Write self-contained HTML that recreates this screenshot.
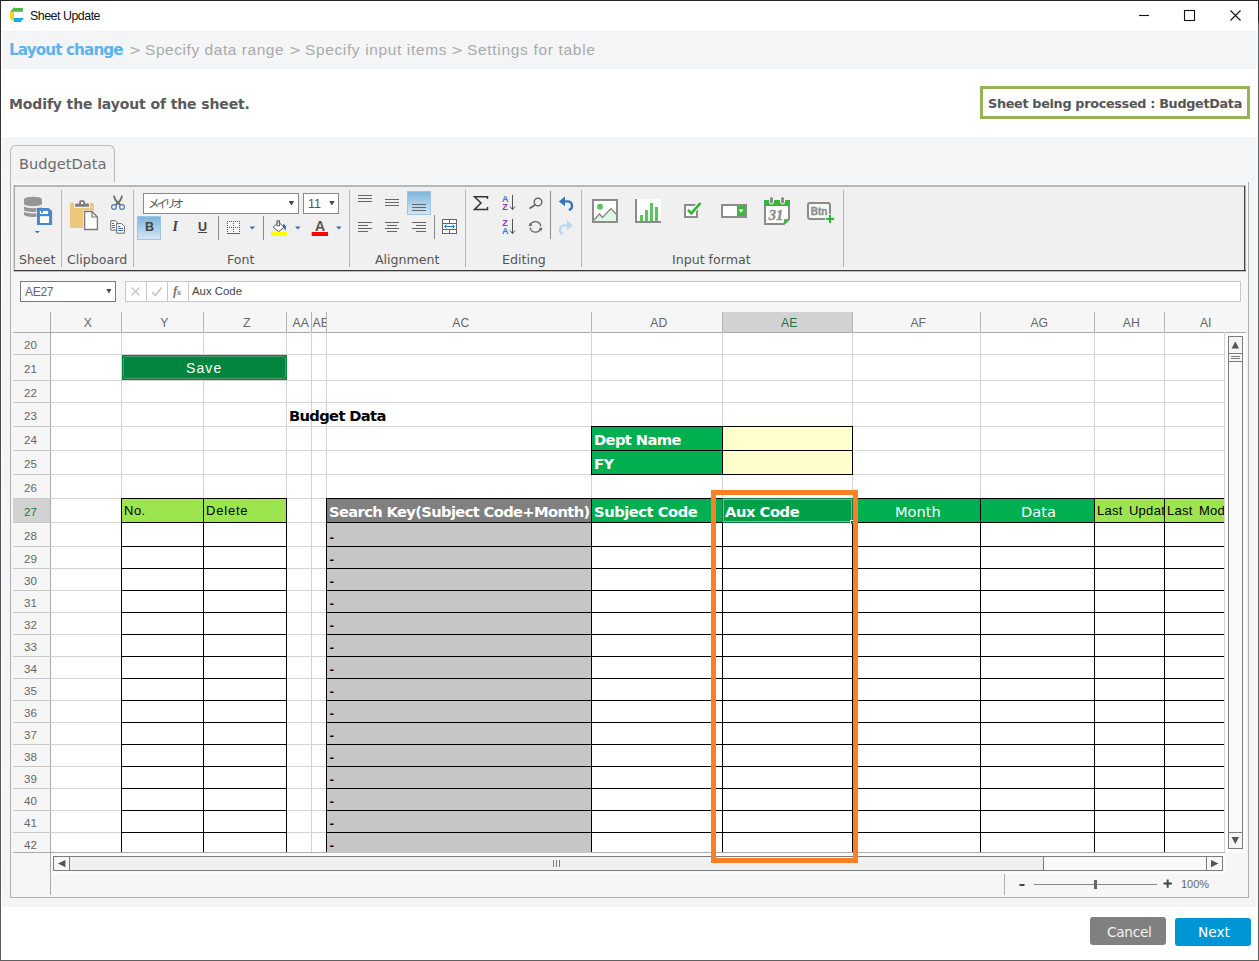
<!DOCTYPE html>
<html lang="en"><head><meta charset="utf-8"><title>Sheet Update</title>
<style>
*{box-sizing:border-box;margin:0;padding:0}
html,body{width:1259px;height:961px;overflow:hidden;background:#fff}
body{font-family:"DejaVu Sans","Liberation Sans","Noto Sans CJK JP",sans-serif;color:#555}
#win{position:absolute;left:0;top:0;width:1259px;height:961px;background:#fff;overflow:hidden}
#win div,#win span,#win i,#win svg{position:absolute}
.t{white-space:nowrap;line-height:1}
/* frame */
#bL{left:0;top:0;width:1px;height:961px;background:linear-gradient(#2a2a2a,#444 30%,#606060)}
#bT{left:0;top:0;width:1259px;height:1px;background:#22242a}
#bR{left:1258px;top:0;width:1px;height:961px;background:linear-gradient(#222 0,#222 20px,#5a6064 24px,#606060)}
#bB{left:0;top:960px;width:1259px;height:1px;background:#606060}
#crumb{left:2px;top:31px;width:1255px;height:38px;background:#f4f5f7}
#body{left:2px;top:137px;width:1255px;height:770px;background:#f4f5f7}
#panel{left:10px;top:182px;width:1239px;height:716px;background:#f6f6f6;border:1px solid #b0b0b0;border-top:none}
#tab{left:10px;top:145px;width:105px;height:37px;border:1px solid #b9b9b9;border-bottom:none;border-radius:6px 6px 0 0;background:#f2f2f2}
#badge{left:980px;top:86px;width:270px;height:33px;border:3px solid #96b455;background:#fff}
/* ribbon */
#ribbon{left:13px;top:185px;width:1233px;height:87px;background:#f0f0f0}
.rb{background:#ababab}
.sep{width:1px;background:#b5b5b5}
.gl{font-size:12.6px;color:#555;white-space:nowrap;line-height:1}
/* sheet */
#sheet{left:0;top:0;width:1259px;height:961px}
.ch{top:312px;height:20px;line-height:23px;text-align:center;font-family:"Liberation Sans",sans-serif;font-size:12.2px;color:#666;overflow:hidden;white-space:nowrap;padding-left:4.5px}
.ch.sel{background:#d2d2d2;color:#217346;top:312px}
.rh{left:13px;width:37px;text-align:center;font-family:"Liberation Sans",sans-serif;font-size:11.6px;color:#666;overflow:hidden;padding-right:2px}
.rh.sel{background:#d2d2d2;color:#217346}
.vl{top:332px;width:1px;height:520px;background:#d4d4d4}
.hl{left:50px;width:1174px;height:1px;background:#d4d4d4}
.bl{height:1px;background:#000}
.bv{top:498px;width:1px;height:354px;background:#000}
.gc{left:327px;width:264px;background:#c6c6c6;color:#000;font-size:11px;font-weight:bold;padding-left:2.5px;line-height:12px;overflow:hidden}
.cell{overflow:hidden;white-space:nowrap}

.hs{top:312px;width:1px;height:20px;background:#b4b4b4}
.rl{left:13px;width:37px;height:1px;background:#c8c8c8}

</style></head>
<body>
<div id="win">
<div id="crumb"></div>
<div id="body"></div>
<!-- title bar -->
<svg style="left:9px;top:6px" width="17" height="17" viewBox="9 6 17 17">
 <path d="M10 11.800 L14.300 7.100 L14.900 8 L22.900 7.900 V11.800Z" fill="#4db848"/>
 <path d="M10 11.800 H14 V22 L10 18.500Z" fill="#ffd02a"/>
 <path d="M14 18 H24 L20.700 22 H14Z" fill="#10b0f0"/>
</svg>
<span class="t" id="ttl" style="left:30px;top:9.6px;font-family:'Liberation Sans',sans-serif;font-size:12.4px;color:#111;letter-spacing:-0.48px">Sheet Update</span>
<svg style="left:1130px;top:5px" width="120" height="22" viewBox="0 0 120 22" fill="none" stroke="#111" stroke-width="1.1">
 <path d="M9 10.5 H19"/>
 <rect x="54.5" y="5.5" width="10" height="10"/>
 <path d="M100.5 5.5 L110.5 15.5 M110.5 5.5 L100.5 15.5"/>
</svg>
<!-- breadcrumb -->
<span class="t" id="c1" style="left:9px;top:42.5px;font-size:15.2px;font-weight:bold;color:#5ab4f0;letter-spacing:-0.88px">Layout change</span>
<span class="t" id="c2" style="left:129px;top:43px;font-size:14.8px;color:#aaa"><span style="position:static">&gt;</span></span>
<span class="t" id="c3" style="left:145px;top:42px;font-family:\'DejaVu Sans Condensed\',\'DejaVu Sans\',sans-serif;font-size:15.5px;color:#aaa;letter-spacing:0.55px">Specify data range</span>
<span class="t" id="c4" style="left:289px;top:43px;font-size:14.8px;color:#aaa">&gt;</span>
<span class="t" id="c5" style="left:305px;top:42px;font-family:\'DejaVu Sans Condensed\',\'DejaVu Sans\',sans-serif;font-size:15.5px;color:#aaa;letter-spacing:0.63px">Specify input items</span>
<span class="t" id="c6" style="left:451px;top:43px;font-size:14.8px;color:#aaa">&gt;</span>
<span class="t" id="c7" style="left:467px;top:42px;font-family:\'DejaVu Sans Condensed\',\'DejaVu Sans\',sans-serif;font-size:15.5px;color:#aaa;letter-spacing:0.68px">Settings for table</span>
<!-- heading -->
<span class="t" id="hd" style="left:9px;top:97px;font-size:14px;font-weight:bold;color:#5a5a5a;letter-spacing:-0.12px">Modify the layout of the sheet.</span>
<div id="badge"></div>
<span class="t" id="bdt" style="left:988px;top:97.6px;font-size:12.8px;font-weight:bold;color:#555;letter-spacing:-0.32px">Sheet being processed : BudgetData</span>
<!-- panel + tab -->
<div id="panel"></div>
<div id="tab"></div>
<span class="t" id="tabt" style="left:19px;top:157px;font-size:14.6px;color:#6c6c6c">BudgetData</span>
<div id="ribbon"></div>
<i class="rb" style="left:13px;top:185px;width:1233px;height:2px;background:#b8b8b8"></i>
<i class="rb" style="left:13px;top:185px;width:1px;height:87px;background:#d6d6d6"></i>
<i class="rb" style="left:14px;top:185px;width:1px;height:86px;background:#a8a8a8"></i>
<i class="rb" style="left:1244px;top:186px;width:1px;height:86px;background:#444"></i>
<i class="rb" style="left:1245px;top:186px;width:1px;height:86px;background:#b4b4b4"></i>
<i class="rb" style="left:14px;top:270px;width:1232px;height:1px;background:#3c3c3c"></i>
<i class="rb" style="left:14px;top:271px;width:1232px;height:1px;background:#bdbdbd"></i>
<i class="sep" style="left:61px;top:190px;height:77px"></i>
<i class="sep" style="left:133px;top:190px;height:77px"></i>
<i class="sep" style="left:349px;top:190px;height:77px"></i>
<i class="sep" style="left:465px;top:190px;height:77px"></i>
<i class="sep" style="left:581px;top:190px;height:77px"></i>
<i class="sep" style="left:843px;top:190px;height:77px"></i>
<i class="sep" style="left:218px;top:216px;height:24px;background:#8a8a8a"></i>
<i class="sep" style="left:263px;top:216px;height:24px;background:#8a8a8a"></i>
<i class="sep" style="left:434px;top:215px;height:24px;background:#8a8a8a"></i>
<i class="sep" style="left:550px;top:191px;height:48px;background:#8a8a8a"></i>
<span class="gl" id="g1" style="left:19px;top:254px">Sheet</span>
<span class="gl" id="g2" style="left:67px;top:254px">Clipboard</span>
<span class="gl" id="g3" style="left:227px;top:254px">Font</span>
<span class="gl" id="g4" style="left:375px;top:254px">Alignment</span>
<span class="gl" id="g5" style="left:502px;top:254px">Editing</span>
<span class="gl" id="g6" style="left:672px;top:254px">Input format</span>
<!-- font combos -->
<div style="left:143px;top:193px;width:156px;height:21px;background:#fff;border:1px solid #8a8a8a"></div>
<span class="t" id="fname" style="left:148px;top:198px;font-family:'Noto Sans CJK JP',sans-serif;font-size:11.5px;color:#555;letter-spacing:-3.3px">メイリオ</span>
<div style="left:303px;top:193px;width:36px;height:21px;background:#fff;border:1px solid #8a8a8a"></div>
<span class="t" id="fsize" style="left:308px;top:198px;font-family:'Liberation Sans',sans-serif;font-size:12.5px;color:#555">11</span>
<!-- bold button / selected align -->
<div style="left:137px;top:216px;width:24px;height:24px;background:linear-gradient(#7fb5dc,#d3e6f5);border:1px solid #9cc6e6"></div>
<div style="left:407px;top:191px;width:24px;height:24px;background:linear-gradient(#7fb5dc,#d3e6f5);border:1px solid #9cc6e6"></div>
<span class="t" id="bB2" style="left:145px;top:221px;font-family:'Liberation Sans',sans-serif;font-weight:bold;font-size:12.5px;color:#444">B</span>
<span class="t" id="bI" style="left:172.5px;top:220px;font-family:'Liberation Serif',serif;font-weight:bold;font-style:italic;font-size:14px;color:#444">I</span>
<span class="t" id="bU" style="left:198px;top:221px;font-family:'Liberation Sans',sans-serif;font-weight:bold;font-size:12.5px;color:#444">U</span>
<i style="left:198px;top:232px;width:9px;height:1px;background:#444"></i>
<svg id="ico" style="left:0;top:0" width="1259" height="280" viewBox="0 0 1259 280">
<!-- DB + floppy -->
<g fill="#969696">
 <path d="M24 199.300 a9 2.500 0 0 1 18 0 v4.500 a9 2.500 0 0 1 -18 0z"/>
 <path d="M24 205.900 a9 2.300 0 0 0 18 0 v3.800 a9 2.300 0 0 1 -18 0z"/>
 <path d="M24 211.200 a9 2.300 0 0 0 18 0 v3.400 a9 2.300 0 0 1 -18 0z"/>
</g>
<path d="M36.500 207.500 H49 L52.600 211 V225.500 H36.500Z" fill="#f6f2ee"/>
<path d="M37 208 H48.600 L52.100 211.100 V225 H37Z" fill="#4a86c8"/>
<rect x="39.900" y="216.200" width="9.200" height="6.800" fill="#fff"/>
<rect x="39.900" y="210.900" width="8.200" height="3.100" fill="#fff"/>
<rect x="41" y="210.900" width="1.900" height="1.900" fill="#4a86c8"/>
<path d="M34.700 231 h5.400 l-2.700 2.300z" fill="#4472c4"/>
<!-- clipboard -->
<path d="M72 202.800 H74 V208 H90 V202.800 H92 a2 2 0 0 1 2 2 V226 a2 2 0 0 1 -2 2 H72 a2 2 0 0 1 -2 -2 V204.800 a2 2 0 0 1 2 -2z" fill="#ecc77c"/>
<path d="M75.100 206.700 v-2.300 a1 1 0 0 1 1 -1 h3.100 v-1.700 a1.500 1.500 0 0 1 1.500 -1.500 h2.600 a1.500 1.500 0 0 1 1.500 1.500 v1.700 h3.200 a1 1 0 0 1 1 1 v2.300z" fill="#7d7d7d"/>
<rect x="81" y="202" width="2" height="2" fill="#fff"/>
<path d="M83.200 210.200 H92.500 L98.800 216.500 V230.900 H83.200Z" fill="#f4f2f0"/>
<path d="M84.600 211.500 H92 L97.400 217 V229.500 H84.600Z" fill="#fff" stroke="#777" stroke-width="1.300"/>
<path d="M92 211.500 V217 H97.400" fill="none" stroke="#777" stroke-width="1.200"/>
<!-- scissors -->
<path d="M114 195.600 q0.500 5 6.500 9.500 M122 195.600 q-0.500 5 -6.500 9.500" stroke="#6e6e6e" stroke-width="1.900" fill="none"/>
<circle cx="114" cy="207" r="2.400" fill="none" stroke="#4a7ab8" stroke-width="1.200"/>
<circle cx="122" cy="207" r="2.400" fill="none" stroke="#4a7ab8" stroke-width="1.200"/>
<!-- copy -->
<path d="M110.800 220.700 H115.300 L117.300 222.700 V230.100 H110.800Z" fill="#fff" stroke="#666" stroke-width="1"/>
<path d="M116.700 223.600 H121.600 L124.400 226.400 V233.200 H116.700Z" fill="#fff" stroke="#666" stroke-width="1"/>
<path d="M112 223.500 h2 M112 225.500 h3 M112 227.500 h3 M118.300 226.500 h2 M118.300 228.500 h4.700 M118.300 230.500 h4.700" stroke="#3a6db0" stroke-width="1"/>
<!-- combo arrows -->
<path d="M288.7 201 h5.4 l-2.7 4.6z M329.2 201 h5.4 l-2.7 4.6z" fill="#444"/>
<!-- border icon -->
<rect x="227" y="221" width="13" height="12" fill="#f8f8f8"/>
<g stroke="#555" stroke-width="1" stroke-dasharray="1 1" fill="none">
 <path d="M227.500 221 V233 M233.500 221 V233 M239.500 221 V233 M227 221.500 H240 M227 227.500 H240"/>
</g>
<path d="M227 233.500 H240" stroke="#666" stroke-width="1"/>
<path d="M249.500 226.600 h5.600 l-2.800 3z M295 226.600 h5.600 l-2.800 3z M336 226.600 h5.600 l-2.800 3z" fill="#3b6db5"/>
<!-- paint bucket -->
<path d="M283.600 223.800 q4.200 2.600 1.400 7.200 q-0.600 -3.600 -2.400 -4.200z" fill="#3b6db5"/>
<path d="M278.600 222 L284 227.200 L278.600 231.800 L273.200 227.200Z" fill="#fff" stroke="#555" stroke-width="1"/>
<rect x="277" y="220.800" width="2.600" height="5" fill="none" stroke="#555" stroke-width="0.900"/>
<rect x="271" y="232" width="16" height="4" fill="#ffff00"/>
<!-- font color -->
<text x="320" y="231" text-anchor="middle" font-family="Liberation Sans, sans-serif" font-weight="bold" font-size="14" fill="#555">A</text>
<rect x="311.7" y="232" width="16.3" height="4" fill="#ff0000"/>
<!-- alignment icons -->
<g stroke="#666" stroke-width="1" fill="none">
 <path d="M358 195.5 h14 M358 198.5 h14 M358 201.5 h14"/>
 <path d="M385 199.5 h14 M385 202.5 h14 M385 205.5 h14"/>
 <path d="M412 204.5 h14 M412 207.5 h14 M412 210.5 h14"/>
 <path d="M358 222.5 h14 M358 225.5 h10 M358 228.5 h14 M358 231.5 h10"/>
 <path d="M385 222.5 h14 M387 225.5 h10 M385 228.5 h14 M387 231.5 h10"/>
 <path d="M412 222.5 h14 M416 225.5 h10 M412 228.5 h14 M416 231.5 h10"/>
</g>
<!-- merge -->
<g stroke="#666" stroke-width="1" fill="#fff">
 <rect x="442.5" y="219.5" width="14" height="14"/>
 <path d="M442.500 223.5 h14 M442.500 229.500 h14 M449.500 219.500 v4 M449.500 229.500 v4" fill="none"/>
</g>
<path d="M444.500 226.500 h10 M446.500 224.700 l-2 1.800 l2 1.800 M452.500 224.700 l2 1.800 l-2 1.800" stroke="#2e75b6" stroke-width="1" fill="none"/>
<!-- sigma -->
<path d="M487.500 199 V196.700 H474.500 L481 203 L474.500 209.400 H487.500 V207" fill="none" stroke="#333" stroke-width="1.500"/>
<!-- sort -->
<text x="502" y="202" font-family="Liberation Sans, sans-serif" font-weight="bold" font-size="9" fill="#3d7cc9">A</text>
<text x="502.300" y="210" font-family="Liberation Sans, sans-serif" font-weight="bold" font-size="9" fill="#8b3fa6">Z</text>
<text x="502.300" y="225.800" font-family="Liberation Sans, sans-serif" font-weight="bold" font-size="9" fill="#8b3fa6">Z</text>
<text x="502" y="234" font-family="Liberation Sans, sans-serif" font-weight="bold" font-size="9" fill="#3d7cc9">A</text>
<path d="M512.500 195 V209.500 M510 206.500 l2.500 3 l2.500 -3 M512.500 219 V233.500 M510 230.500 l2.500 3 l2.500 -3" fill="none" stroke="#555" stroke-width="1"/>
<!-- search -->
<circle cx="538" cy="202" r="3.800" fill="none" stroke="#666" stroke-width="1.400"/>
<path d="M535.200 204.800 L529.500 208.500" stroke="#666" stroke-width="1.800"/>
<!-- refresh -->
<path d="M530.300 225.400 A5.400 5.400 0 0 1 540.800 226.300 M540.700 228.400 A5.400 5.400 0 0 1 530.200 227.500" fill="none" stroke="#666" stroke-width="1.300"/>
<path d="M528.600 226.200 l1.300 -3.600 l2.600 2.800z M542.500 227.600 l-1.300 3.600 l-2.600 -2.800z" fill="#666"/>
<!-- undo / redo -->
<path d="M564 201.400 H567.600 a4.400 4.400 0 0 1 1.300 8.600" fill="none" stroke="#3a74b8" stroke-width="2.400"/>
<path d="M558.800 201.400 L565 196.600 V206.200Z" fill="#3a74b8"/>
<path d="M568 225.400 H564.400 a4.400 4.400 0 0 0 -1.300 8.600" fill="none" stroke="#bdd7ee" stroke-width="2.400"/>
<path d="M573.200 225.400 L567 220.600 V230.200Z" fill="#bdd7ee"/>
<!-- image icon -->
<rect x="593" y="200" width="24" height="22" fill="#fff" stroke="#8c8c8c" stroke-width="2"/>
<path d="M594 220 L599.500 214 L602.500 217.500 L611 208.500 L616 214 V221 H594Z" fill="#dff8df"/>
<path d="M594 220 L599.500 214 L602.500 217.500 L611 208.500 L616.500 214.500" fill="none" stroke="#8c8c8c" stroke-width="1.500"/>
<circle cx="600" cy="206.800" r="3" fill="#5cc45c"/>
<!-- chart icon -->
<rect x="635" y="199" width="26" height="24" fill="#fff"/>
<path d="M636 199 V222 H661" fill="none" stroke="#8c8c8c" stroke-width="2"/>
<path d="M640 215 h3 v6 h-3z M645 210 h3 v11 h-3z M650 203 h3 v18 h-3z M655 207 h3 v14 h-3z" fill="#5cc45c"/>
<!-- checkbox -->
<rect x="685" y="205" width="12" height="12" fill="#fff" stroke="#8c8c8c" stroke-width="2"/>
<path d="M692 212 L700.500 203" fill="none" stroke="#f0f0f0" stroke-width="5"/>
<path d="M688 209.800 L691.300 213.300 L700.500 203" fill="none" stroke="#2db52d" stroke-width="2.600"/>
<!-- dropdown -->
<rect x="722" y="205" width="24" height="12" fill="#fff" stroke="#8c8c8c" stroke-width="2"/>
<rect x="737" y="206" width="8" height="10" fill="#3cb53c"/>
<path d="M738.500 209.500 h5 l-2.500 3.500z" fill="#fff"/>
<!-- calendar -->
<path d="M765 201 H789 V219 L783.500 224 H765Z" fill="#fff" stroke="#8c8c8c" stroke-width="2"/>
<rect x="764" y="200" width="26" height="6" fill="#3cb53c"/>
<path d="M784 219.200 H790 L784 225Z" fill="#3cb53c"/>
<rect x="769.500" y="196.500" width="4" height="7.500" rx="2" fill="#8c8c8c" stroke="#fff" stroke-width="1"/>
<rect x="780.500" y="196.500" width="4" height="7.500" rx="2" fill="#8c8c8c" stroke="#fff" stroke-width="1"/>
<text x="776" y="219.500" text-anchor="middle" font-family="Liberation Serif, serif" font-weight="bold" font-style="italic" font-size="14.500" fill="#8c8c8c" stroke="#8c8c8c" stroke-width="0.400">31</text>
<!-- Btn -->
<rect x="808" y="203" width="22" height="16" rx="2" fill="#f4fcf4" stroke="#8c8c8c" stroke-width="2"/>
<text x="819" y="215" text-anchor="middle" font-family="Liberation Sans, sans-serif" font-weight="bold" font-size="10" fill="#8c8c8c" stroke="#8c8c8c" stroke-width="0.300">Btn</text>
<path d="M825 219 h10 M830 214 v10" stroke="#f0f0f0" stroke-width="4"/>
<path d="M826 219 h8 M830 215 v8" stroke="#2db52d" stroke-width="2"/>
</svg>
<div id="sheet">
<!-- formula bar -->
<div style="left:20px;top:281px;width:96px;height:21px;background:#fff;border:1px solid #7a7a7a"></div>
<span class="t" id="nb" style="left:25px;top:286px;font-family:'Liberation Sans',sans-serif;font-size:12px;color:#666;letter-spacing:-0.3px">AE27</span>
<div style="left:125px;top:281px;width:1116px;height:21px;background:#fff;border:1px solid #c8c8c8"></div>
<i style="left:146px;top:282px;width:1px;height:19px;background:#c8c8c8"></i>
<i style="left:167px;top:282px;width:1px;height:19px;background:#c8c8c8"></i>
<i style="left:188px;top:282px;width:1px;height:19px;background:#c8c8c8"></i>
<svg style="left:100px;top:280px" width="100" height="24" viewBox="100 280 100 24">
 <path d="M106.400 289 h5 l-2.500 4.600z" fill="#444"/>
 <path d="M131.500 287.500 l8 8 M139.500 287.500 l-8 8" stroke="#c4c4c4" stroke-width="1.300" fill="none"/>
 <path d="M152 292 l3.200 3.500 l6.500 -8" stroke="#c4c4c4" stroke-width="1.600" fill="none"/>
</svg>
<span class="t" id="fx" style="left:173px;top:284px;font-family:'Liberation Serif',serif;font-style:italic;font-weight:bold;font-size:13px;color:#777;letter-spacing:-0.5px">f<span style="position:static;font-size:9px">x</span></span>
<span class="t" id="fv" style="left:192px;top:286px;font-family:'Liberation Sans',sans-serif;font-size:11.4px;color:#444;letter-spacing:0">Aux Code</span>
<!-- grid background -->
<div style="left:50px;top:332px;width:1175px;height:521px;background:#fff"></div>
<i style="left:13px;top:332px;width:1233px;height:1px;background:#ababab"></i>
<i style="left:13px;top:852px;width:1212px;height:1px;background:#ababab"></i>
<i style="left:50px;top:312px;width:1px;height:583px;background:#ababab"></i>
<i style="left:1224px;top:332px;width:1px;height:521px;background:#ababab"></i>
<div style="left:51px;top:853px;width:1174px;height:21px;background:#fcfcfc"></div>
<div style="left:1225px;top:333px;width:21px;height:520px;background:#fdfdfd"></div>
<div class="ch" style="left:50px;width:71px">X</div><div class="ch" style="left:121px;width:82px">Y</div><div class="ch" style="left:203px;width:83px">Z</div><div class="ch" style="left:286px;width:25px">AA</div><div class="ch" style="left:311px;width:15px;text-align:left;padding-left:1.5px">AB</div><div class="ch" style="left:326px;width:265px">AC</div><div class="ch" style="left:591px;width:131px">AD</div><div class="ch sel" style="left:722px;width:130px">AE</div><div class="ch" style="left:852px;width:128px">AF</div><div class="ch" style="left:980px;width:114px">AG</div><div class="ch" style="left:1094px;width:70px">AH</div><div class="ch" style="left:1164px;width:79px">AI</div>
<div class="rh" style="top:332px;height:22px;line-height:25px">20</div><div class="rh" style="top:354px;height:26px;line-height:29px">21</div><div class="rh" style="top:380px;height:22px;line-height:25px">22</div><div class="rh" style="top:402px;height:24px;line-height:27px">23</div><div class="rh" style="top:426px;height:24px;line-height:27px">24</div><div class="rh" style="top:450px;height:24px;line-height:27px">25</div><div class="rh" style="top:474px;height:24px;line-height:27px">26</div><div class="rh sel" style="top:498px;height:24px;line-height:27px">27</div><div class="rh" style="top:522px;height:24px;line-height:27px">28</div><div class="rh" style="top:546px;height:22px;line-height:25px">29</div><div class="rh" style="top:568px;height:22px;line-height:25px">30</div><div class="rh" style="top:590px;height:22px;line-height:25px">31</div><div class="rh" style="top:612px;height:22px;line-height:25px">32</div><div class="rh" style="top:634px;height:22px;line-height:25px">33</div><div class="rh" style="top:656px;height:22px;line-height:25px">34</div><div class="rh" style="top:678px;height:22px;line-height:25px">35</div><div class="rh" style="top:700px;height:22px;line-height:25px">36</div><div class="rh" style="top:722px;height:22px;line-height:25px">37</div><div class="rh" style="top:744px;height:22px;line-height:25px">38</div><div class="rh" style="top:766px;height:22px;line-height:25px">39</div><div class="rh" style="top:788px;height:22px;line-height:25px">40</div><div class="rh" style="top:810px;height:22px;line-height:25px">41</div><div class="rh" style="top:832px;height:20px;line-height:25px">42</div>
<i class="vl" style="left:121px"></i><i class="hs" style="left:121px"></i><i class="vl" style="left:203px"></i><i class="hs" style="left:203px"></i><i class="vl" style="left:286px"></i><i class="hs" style="left:286px"></i><i class="vl" style="left:311px"></i><i class="hs" style="left:311px"></i><i class="vl" style="left:326px"></i><i class="hs" style="left:326px"></i><i class="vl" style="left:591px"></i><i class="hs" style="left:591px"></i><i class="vl" style="left:722px"></i><i class="hs" style="left:722px"></i><i class="vl" style="left:852px"></i><i class="hs" style="left:852px"></i><i class="vl" style="left:980px"></i><i class="hs" style="left:980px"></i><i class="vl" style="left:1094px"></i><i class="hs" style="left:1094px"></i><i class="vl" style="left:1164px"></i><i class="hs" style="left:1164px"></i><i class="vl" style="left:1224px"></i><i class="hl" style="top:354px"></i><i class="rl" style="top:354px"></i><i class="hl" style="top:380px"></i><i class="rl" style="top:380px"></i><i class="hl" style="top:402px"></i><i class="rl" style="top:402px"></i><i class="hl" style="top:426px"></i><i class="rl" style="top:426px"></i><i class="hl" style="top:450px"></i><i class="rl" style="top:450px"></i><i class="hl" style="top:474px"></i><i class="rl" style="top:474px"></i><i class="hl" style="top:498px"></i><i class="rl" style="top:498px"></i><i class="hl" style="top:522px"></i><i class="rl" style="top:522px"></i><i class="hl" style="top:546px"></i><i class="rl" style="top:546px"></i><i class="hl" style="top:568px"></i><i class="rl" style="top:568px"></i><i class="hl" style="top:590px"></i><i class="rl" style="top:590px"></i><i class="hl" style="top:612px"></i><i class="rl" style="top:612px"></i><i class="hl" style="top:634px"></i><i class="rl" style="top:634px"></i><i class="hl" style="top:656px"></i><i class="rl" style="top:656px"></i><i class="hl" style="top:678px"></i><i class="rl" style="top:678px"></i><i class="hl" style="top:700px"></i><i class="rl" style="top:700px"></i><i class="hl" style="top:722px"></i><i class="rl" style="top:722px"></i><i class="hl" style="top:744px"></i><i class="rl" style="top:744px"></i><i class="hl" style="top:766px"></i><i class="rl" style="top:766px"></i><i class="hl" style="top:788px"></i><i class="rl" style="top:788px"></i><i class="hl" style="top:810px"></i><i class="rl" style="top:810px"></i><i class="hl" style="top:832px"></i><i class="rl" style="top:832px"></i>
<!-- Save button -->
<div style="left:122px;top:355px;width:165px;height:25px;background:#00853e"></div>
<div style="left:123px;top:356px;width:163px;height:23px;border:1px solid #4a9a6a;border-radius:3px"></div>
<span class="t" id="save" style="left:186px;top:361px;font-family:'Liberation Sans',sans-serif;font-size:14px;color:#fff;letter-spacing:1.1px">Save</span>
<span class="t" id="bd" style="left:289px;top:409px;font-size:14.7px;font-weight:bold;color:#000;letter-spacing:-0.65px">Budget Data</span>
<!-- Dept / FY -->
<div class="cell" style="left:591px;top:426px;width:132px;height:49px;background:#00b050;border:1px solid #000"></div>
<div class="cell" style="left:722px;top:426px;width:131px;height:49px;background:#ffffcc;border:1px solid #000"></div>
<i class="bl" style="left:591px;top:450px;width:262px"></i>
<span class="t" id="dn" style="left:594px;top:433px;font-size:14.7px;font-weight:bold;color:#fff;letter-spacing:-0.6px">Dept Name</span>
<span class="t" id="fy" style="left:594px;top:457px;font-size:14.7px;font-weight:bold;color:#fff;letter-spacing:-0.45px">FY</span>
<!-- row 27 -->
<div class="cell" style="left:121px;top:498px;width:166px;height:25px;background:#9ce54e;border:1px solid #000"></div>
<div class="cell" style="left:326px;top:498px;width:266px;height:25px;background:#808080;border:1px solid #000"></div>
<div class="cell" style="left:591px;top:498px;width:504px;height:25px;background:#00b050;border:1px solid #000"></div>
<div class="cell" style="left:1094px;top:498px;width:130px;height:25px;background:#9ce54e;border:1px solid #000;border-right:none"></div>
<span class="t" id="no" style="left:124px;top:504px;font-family:'Liberation Sans',sans-serif;font-size:13px;color:#000;letter-spacing:0.5px">No.</span>
<span class="t" id="del" style="left:206px;top:504px;font-family:'Liberation Sans',sans-serif;font-size:13px;color:#000;letter-spacing:0.8px">Delete</span>
<div class="cell" style="left:327px;top:499px;width:264px;height:23px"><span class="t" id="sk" style="left:2px;top:6px;font-size:14.7px;font-weight:bold;color:#fff;letter-spacing:-0.64px">Search Key(Subject Code+Month)</span></div>
<span class="t" id="sc" style="left:594px;top:505px;font-size:14.7px;font-weight:bold;color:#fff;letter-spacing:-0.45px">Subject Code</span>
<span class="t" id="mo" style="left:895px;top:505px;font-size:14.6px;color:#fff">Month</span>
<span class="t" id="da" style="left:1021px;top:505px;font-size:14.6px;color:#fff">Data</span>
<div class="cell" style="left:1095px;top:499px;width:69px;height:23px"><span class="t" id="lu" style="left:2px;top:5px;font-family:'Liberation Sans',sans-serif;font-size:13px;color:#000;letter-spacing:0.3px;word-spacing:2.2px">Last Updated</span></div>
<div class="cell" style="left:1165px;top:499px;width:59px;height:23px"><span class="t" id="lm" style="left:2px;top:5px;font-family:'Liberation Sans',sans-serif;font-size:13px;color:#000;letter-spacing:0.3px;word-spacing:2.2px">Last Modified</span></div>
<div class="gc" style="top:523px;height:23px;padding-top:9px">-</div><i class="bl" style="top:546px;left:121px;width:166px"></i><i class="bl" style="top:546px;left:326px;width:898px"></i><div class="gc" style="top:547px;height:21px;padding-top:7px">-</div><i class="bl" style="top:568px;left:121px;width:166px"></i><i class="bl" style="top:568px;left:326px;width:898px"></i><div class="gc" style="top:569px;height:21px;padding-top:7px">-</div><i class="bl" style="top:590px;left:121px;width:166px"></i><i class="bl" style="top:590px;left:326px;width:898px"></i><div class="gc" style="top:591px;height:21px;padding-top:7px">-</div><i class="bl" style="top:612px;left:121px;width:166px"></i><i class="bl" style="top:612px;left:326px;width:898px"></i><div class="gc" style="top:613px;height:21px;padding-top:7px">-</div><i class="bl" style="top:634px;left:121px;width:166px"></i><i class="bl" style="top:634px;left:326px;width:898px"></i><div class="gc" style="top:635px;height:21px;padding-top:7px">-</div><i class="bl" style="top:656px;left:121px;width:166px"></i><i class="bl" style="top:656px;left:326px;width:898px"></i><div class="gc" style="top:657px;height:21px;padding-top:7px">-</div><i class="bl" style="top:678px;left:121px;width:166px"></i><i class="bl" style="top:678px;left:326px;width:898px"></i><div class="gc" style="top:679px;height:21px;padding-top:7px">-</div><i class="bl" style="top:700px;left:121px;width:166px"></i><i class="bl" style="top:700px;left:326px;width:898px"></i><div class="gc" style="top:701px;height:21px;padding-top:7px">-</div><i class="bl" style="top:722px;left:121px;width:166px"></i><i class="bl" style="top:722px;left:326px;width:898px"></i><div class="gc" style="top:723px;height:21px;padding-top:7px">-</div><i class="bl" style="top:744px;left:121px;width:166px"></i><i class="bl" style="top:744px;left:326px;width:898px"></i><div class="gc" style="top:745px;height:21px;padding-top:7px">-</div><i class="bl" style="top:766px;left:121px;width:166px"></i><i class="bl" style="top:766px;left:326px;width:898px"></i><div class="gc" style="top:767px;height:21px;padding-top:7px">-</div><i class="bl" style="top:788px;left:121px;width:166px"></i><i class="bl" style="top:788px;left:326px;width:898px"></i><div class="gc" style="top:789px;height:21px;padding-top:7px">-</div><i class="bl" style="top:810px;left:121px;width:166px"></i><i class="bl" style="top:810px;left:326px;width:898px"></i><div class="gc" style="top:811px;height:21px;padding-top:7px">-</div><i class="bl" style="top:832px;left:121px;width:166px"></i><i class="bl" style="top:832px;left:326px;width:898px"></i><div class="gc" style="top:833px;height:20px;padding-top:7px">-</div>
<i class="bv" style="left:121px"></i><i class="bv" style="left:203px"></i><i class="bv" style="left:286px"></i><i class="bv" style="left:326px"></i><i class="bv" style="left:591px"></i><i class="bv" style="left:722px"></i><i class="bv" style="left:852px"></i><i class="bv" style="left:980px"></i><i class="bv" style="left:1094px"></i><i class="bv" style="left:1164px"></i>
<div class="cell" style="left:722px;top:498px;width:131px;height:25px;background:#00a048;border:1px solid #1e7145"></div>
<div class="cell" style="left:723px;top:499px;width:129px;height:23px;border:1px solid #6fbf92"></div>
<i style="left:850px;top:520px;width:4px;height:4px;background:#1e7145;border-left:1px solid #fff;border-top:1px solid #fff"></i>
<span class="t" id="ac" style="left:725px;top:505px;font-size:14.7px;font-weight:bold;color:#fff;letter-spacing:-0.45px">Aux Code</span>
<!-- orange highlight -->
<!-- scrollbars -->
<div style="left:1228px;top:336px;width:15px;height:513px;background:#f9f9f9;border:1px solid #7c7c7c"></div>
<div style="left:1228px;top:336px;width:15px;height:18px;background:#f5f5f5;border:1px solid #7c7c7c"></div>
<div style="left:1228px;top:353px;width:15px;height:9px;background:#f5f5f5;border:1px solid #7c7c7c"></div>
<i style="left:1231px;top:356px;width:9px;height:1px;background:#7c7c7c"></i><i style="left:1231px;top:358px;width:9px;height:1px;background:#7c7c7c"></i>
<div style="left:1228px;top:832px;width:15px;height:17px;background:#f5f5f5;border:1px solid #7c7c7c"></div>
<div style="left:53px;top:856px;width:1170px;height:15px;background:#f0f0f0;border:1px solid #7c7c7c"></div>
<div style="left:53px;top:856px;width:17px;height:15px;background:#f8f8f8;border:1px solid #7c7c7c"></div>
<div style="left:1043px;top:856px;width:164px;height:15px;background:#fafafa;border:1px solid #7c7c7c"></div>
<div style="left:1206px;top:856px;width:17px;height:15px;background:#f8f8f8;border:1px solid #7c7c7c"></div>
<svg style="left:0;top:330px" width="1259" height="570" viewBox="0 330 1259 570">
 <path d="M1231.500 348.500 h7.600 l-3.800 -7z M1231.500 837 h7.600 l-3.800 7z M65.400 860 v7.200 l-7.400 -3.600z M1211 860 v7.200 l7.400 -3.600z" fill="#555"/>
 <path d="M553.500 860 v7 M556.500 860 v7 M559.500 860 v7" stroke="#7c7c7c" stroke-width="1"/>
 <path d="M1034 884.500 H1157" stroke="#888" stroke-width="1"/>
 <rect x="1094" y="880" width="3" height="9" fill="#666"/>
 <path d="M1019.500 885 h5" stroke="#444" stroke-width="2"/>
 <path d="M1163.500 883.600 h8.400 M1167.700 879.500 v8.200" stroke="#444" stroke-width="2"/>
</svg>
<i style="left:1004px;top:874px;width:1px;height:21px;background:#b0b0b0"></i>
<span class="t" id="zp" style="left:1181px;top:879px;font-family:'Liberation Sans',sans-serif;font-size:11px;color:#666">100%</span>
<div style="left:711px;top:490px;width:147px;height:373px;border:5px solid #f98027"></div>
</div>
<div style="left:1090px;top:917px;width:76px;height:28px;background:#808080;border-radius:3px"></div>
<div style="left:1175px;top:918px;width:76px;height:28px;background:#0096d6;border-radius:3px"></div>
<span class="t" id="cn" style="left:1107px;top:926px;font-size:13.7px;color:#f2f2f2;letter-spacing:-0.3px">Cancel</span>
<span class="t" id="nx" style="left:1198px;top:926px;font-size:13.7px;color:#fff">Next</span>
<div id="bL"></div><div id="bT"></div><div id="bR"></div><div id="bB"></div>
</div>
</body></html>
